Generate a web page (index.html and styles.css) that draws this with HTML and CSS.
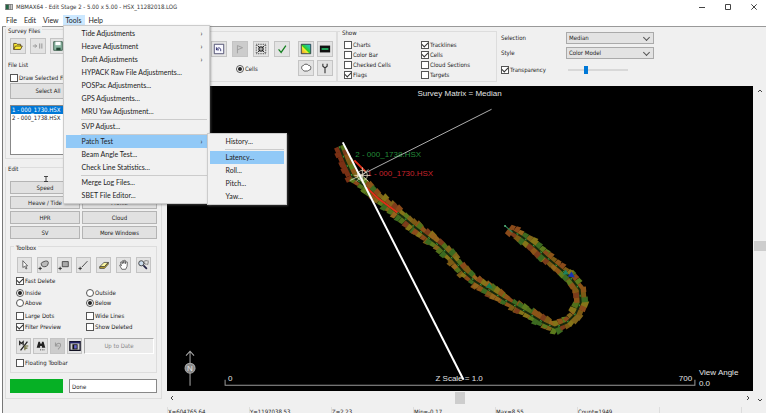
FILE: index.html
```html
<!DOCTYPE html>
<html lang="en">
<head>
<meta charset="utf-8">
<title>MBMAX64 - Edit Stage 2</title>
<link rel="stylesheet" href="styles.css">
</head>
<body>
<div class="app">
  <header class="titlebar">
    <svg class="app-icon" viewBox="0 0 9 7"><path fill="#777" d="M0 0h9v7H0z"/><path fill="#264" d="M1 1h3v5H1z"/><path fill="#ddd" d="M5 1h1v5H5zM7 1h1v5H7z"/></svg>
    <span class="title">MBMAX64 - Edit Stage 2 - 5.00 x 5.00 - HSX_11282018.LOG</span>
    <div class="window-buttons">
      <button aria-label="Minimize"><svg viewBox="0 0 6 6"><path d="M0 3.5h6"/></svg></button>
      <button aria-label="Maximize"><svg viewBox="0 0 6 6"><path d="M.5.5h5v5h-5z"/></svg></button>
      <button aria-label="Close"><svg viewBox="0 0 6 6"><path d="M.3.3l5.4 5.4M5.7.3L.3 5.7"/></svg></button>
    </div>
  </header>
  <nav class="menubar">
    <button>File</button><button>Edit</button><button>View</button>
    <div class="menu-anchor">
      <button class="open">Tools</button>
      <div class="menu tools-menu">
        <button class="sub">Tide Adjustments</button>
        <button class="sub">Heave Adjustment</button>
        <button class="sub">Draft Adjustments</button>
        <button>HYPACK Raw File Adjustments...</button>
        <button>POSPac Adjustments...</button>
        <button>GPS Adjustments...</button>
        <button>MRU Yaw Adjustment...</button>
        <hr>
        <button>SVP Adjust...</button>
        <hr>
        <div class="menu-anchor">
          <button class="sub active">Patch Test</button>
          <div class="menu patch-menu">
            <button>History...</button>
            <hr>
            <button class="active">Latency...</button>
            <button>Roll...</button>
            <button>Pitch...</button>
            <button>Yaw...</button>
          </div>
        </div>
        <button>Beam Angle Test...</button>
        <button>Check Line Statistics...</button>
        <hr>
        <button>Merge Log Files...</button>
        <button>SBET File Editor...</button>
      </div>
    </div>
    <button>Help</button>
  </nav>

  <div class="body">
    <aside class="sidebar">
      <section class="group files">
        <h2>Survey Files</h2>
        <div class="file-buttons">
          <button class="tool" aria-label="Open"><svg viewBox="0 0 14 14"><path fill="#fe3" stroke="#542" d="M2 11V4h3l1 1h4v2M2 11l2-4h8l-2 4z"/></svg></button>
          <button class="tool" aria-label="Convert"><svg viewBox="0 0 14 14"><path fill="none" stroke="#888" d="M1 7h4M3.500 5l2 2-2 2M9 4v6M11.500 4v6"/></svg></button>
          <button class="tool" aria-label="Save"><svg viewBox="0 0 14 14"><path fill="#8cb8a4" stroke="#354" d="M2 2h10v10H2z"/><path fill="#fff" d="M4 2h6v4H4z"/><path fill="#243" d="M5 9h5v3H5z"/></svg></button>
        </div>
        <h3>File List</h3>
        <label class="check"><input type="checkbox">Draw Selected Files</label>
        <button class="btn select-all">Select All</button>
        <ul class="file-list"><li class="selected">1 - 000_1730.HSX</li><li>2 - 000_1738.HSX</li></ul>
      </section>
      <section class="group edit">
        <h2>Edit</h2>
        <div class="edit-grid">
          <button class="btn">Speed</button><button class="btn">Depth</button>
          <button class="btn">Heave / Tide</button><button class="btn">Profile</button>
          <button class="btn">HPR</button><button class="btn">Cloud</button>
          <button class="btn">SV</button><button class="btn">More Windows</button>
        </div>
        <svg class="cursor" viewBox="0 0 4 6"><path fill="none" stroke="#222" stroke-width=".8" d="M0 .5h4M2 .5v5M0 5.500h4"/></svg>
        <section class="group toolbox">
          <h2>Toolbox</h2>
          <div class="tools">
            <button class="tool" aria-label="Select"><svg viewBox="0 0 14 14"><path fill="#fff" stroke="#333" stroke-width=".8" d="M4.500 2v8l2-1.600 1.600 3.300 1.200-.6-1.500-3.100H10z"/></svg></button>
            <button class="tool" aria-label="Lasso"><svg viewBox="0 0 14 14"><path fill="#bbb" stroke="#333" stroke-width=".9" d="M4 7c-1-3 1-3 3-4s5-1 5 1-1 5-4 5c-2 0-3 0-4-2z"/><path stroke="#222" d="M.5 11h4M2.500 9v4"/></svg></button>
            <button class="tool" aria-label="Rectangle"><svg viewBox="0 0 14 14"><path fill="#aaa" stroke="#333" stroke-width=".9" d="M5 3h7v6H5z"/><path stroke="#222" d="M.5 11h4M2.500 9v4"/></svg></button>
            <button class="tool" aria-label="Line"><svg viewBox="0 0 14 14"><path stroke="#333" d="M4.500 9.500L11 2.500"/><path stroke="#222" d="M.5 11h4M2.500 9v4"/></svg></button>
            <button class="tool" aria-label="Erase"><svg viewBox="0 0 14 14"><path fill="#fbf6a0" stroke="#333" stroke-width=".8" d="M2 9l5-5h5L7.500 9z"/><path fill="#cbb030" stroke="#333" stroke-width=".8" d="M2 9h5.500L12 4v2l-4.500 5H2z"/></svg></button>
            <button class="tool" aria-label="Pan"><svg viewBox="0 0 14 14"><path fill="#fff" stroke="#333" stroke-width=".8" d="M4.500 12L2 7.500c0-1.200 1-1 2 .5L3 4c.3-1 1.200-1 1.600 0L5 5.500V2.500c.3-1 1.500-1 1.700 0V5l.5-3c.3-1 1.500-.8 1.500.2L8.500 5.500l1-2c.5-.8 1.600-.4 1.400.5l-.3 4.500L9 12z"/></svg></button>
            <button class="tool" aria-label="Zoom window"><svg viewBox="0 0 14 14"><circle cx="5" cy="5" r="3" fill="#cde" stroke="#333"/><path stroke="#224" stroke-width="2" d="M7.500 7.500l4 4"/><path fill="none" stroke="#222" stroke-dasharray="1 1" d="M9 2h4v4H9z"/></svg></button>
          </div>
          <label class="check"><input type="checkbox" checked>Fast Delete</label>
          <div class="options">
            <label class="check"><input type="radio" name="side" checked>Inside</label>
            <label class="check"><input type="radio" name="side">Outside</label>
            <label class="check"><input type="radio" name="level">Above</label>
            <label class="check"><input type="radio" name="level" checked>Below</label>
          </div>
          <div class="options spaced">
            <label class="check"><input type="checkbox">Large Dots</label>
            <label class="check"><input type="checkbox">Wide Lines</label>
            <label class="check"><input type="checkbox" checked>Filter Preview</label>
            <label class="check"><input type="checkbox">Show Deleted</label>
          </div>
          <div class="filter-row">
            <button class="tool" aria-label="Filter settings"><svg viewBox="0 0 14 14"><path fill="none" stroke="#222" stroke-width="1.500" d="M2 6V2l2 2 2-2v4M3 12l8-10"/><path fill="none" stroke="#663" stroke-width="1.300" d="M8 12V7h4M8 9.500h3"/></svg></button>
            <button class="tool" aria-label="Search"><svg viewBox="0 0 14 14"><path fill="#222" d="M4 2h2v2h2V2h2l2 7H8V7H6v2H2z"/><path stroke="#222" stroke-dasharray="1 1" d="M6 11.500h6"/></svg></button>
            <button class="tool off" aria-label="Undo filter"><svg viewBox="0 0 14 14"><path fill="none" stroke="#999" stroke-width="1.200" d="M4 3v4h4M4 7c2-4 6-4 6-1 0 2-1 3-3 5"/></svg></button>
            <button class="tool" aria-label="Filter window"><svg viewBox="0 0 14 14"><path fill="#ccc" stroke="#112" stroke-width="1.500" d="M1 2h12v10H1z"/><path fill="#226" d="M1 2h12v2H1z"/><path fill="#111" d="M4 5h6v6H4z"/><path fill="#66c" d="M6 6h3v4H6z"/></svg></button>
            <button class="update" disabled>Up to Date</button>
          </div>
          <label class="check"><input type="checkbox">Floating Toolbar</label>
        </section>
        <div class="progress-row">
          <div class="progress"></div>
          <input class="state" type="text" value="Done" aria-label="Status">
        </div>
      </section>
    </aside>

    <main class="main">
      <div class="toolbar">
        <section class="group view-tools">
          <div class="view-buttons">
            <button class="tool" aria-label="Undo"><svg viewBox="0 0 14 14"><path fill="#f8f8ff" stroke="#446" d="M1.500 1.500h11v11h-11z"/><path fill="none" stroke="#226" d="M4 5v3h3M4 8c1-3 5-3 5 0v1.500"/></svg></button>
            <button class="tool off" aria-label="Flag"><svg viewBox="0 0 14 14"><path fill="none" stroke="#999" d="M4 12V3l6 2.500L4 8"/></svg></button>
            <button class="tool" aria-label="Fit"><svg viewBox="0 0 14 14"><path fill="none" stroke="#222" stroke-dasharray="1 1" d="M1.500 1.500h11v11h-11z"/><path fill="none" stroke="#111" d="M3 3l3 3M3.500 6H6V3.500M11 3L8 6M8 3.500V6h2.500M3 11l3-3M3.500 8H6v2.500M11 11L8 8M8 10.500V8h2.500"/></svg></button>
            <button class="tool" aria-label="Apply"><svg viewBox="0 0 14 14"><path fill="none" stroke="#148020" stroke-width="1.500" d="M3 7.500L6 11l5.500-8"/></svg></button>
          </div>
          <div class="color-buttons">
            <button class="tool" aria-label="Colors"><svg viewBox="0 0 14 14"><defs><linearGradient id="g" x1="1" x2="0" y2="1"><stop stop-color="#3bd"/><stop offset=".3" stop-color="#2c8"/><stop offset=".5" stop-color="#3c2"/><stop offset=".6" stop-color="#ee3"/><stop offset="1" stop-color="#e82"/></linearGradient></defs><path fill="url(#g)" stroke="#234" d="M1.500 1.500h11v11h-11z"/></svg></button>
            <button class="tool" aria-label="Display"><svg viewBox="0 0 14 14"><path fill="#111" d="M1 3h12v8H1z"/><path fill="#2b6" d="M3 6h8v2H3z"/></svg></button>
            <button class="tool" aria-label="Cloud"><svg viewBox="0 0 14 14"><path fill="#fff" stroke="#333" stroke-width=".9" d="M3 9C1 7.500 2 4 4 4c1-2 5-2 6 0 3 0 3 3 2 5-2 0-2 2-5 1.500C5 11 4 10 3 9z"/></svg></button>
            <button class="tool" aria-label="Settings"><svg viewBox="0 0 14 14"><path fill="none" stroke="#333" stroke-width="1.300" d="M4.500 2v3L7 7l2.500-2V2M7 6v7"/></svg></button>
          </div>
          <label class="check cells"><input type="radio" checked>Cells</label>
        </section>
        <section class="group show">
          <h2>Show</h2>
          <div class="show-grid">
            <label class="check"><input type="checkbox">Charts</label>
            <label class="check"><input type="checkbox" checked>Tracklines</label>
            <label class="check"><input type="checkbox">Color Bar</label>
            <label class="check"><input type="checkbox" checked>Cells</label>
            <label class="check"><input type="checkbox">Checked Cells</label>
            <label class="check"><input type="checkbox">Cloud Sections</label>
            <label class="check"><input type="checkbox" checked>Flags</label>
            <label class="check"><input type="checkbox">Targets</label>
          </div>
        </section>
        <section class="style-form">
          <label for="sel">Selection</label>
          <div class="select"><select id="sel"><option>Median</option></select></div>
          <label for="sty">Style</label>
          <div class="select"><select id="sty"><option>Color Model</option></select></div>
          <label class="check"><input type="checkbox" checked>Transparency</label>
          <input class="slider" type="range" min="0" max="100" value="29" aria-label="Transparency level">
        </section>
      </div>

      <div class="view">
        <div class="canvas">
          <svg class="plot" viewBox="167 87 585 304">
            <g id="track"></g>
            <g class="t8">
              <text x="355" y="158" fill="#238a38">2 - 000_1738.HSX</text>
              <text x="367" y="177" fill="#c8242c">1 - 000_1730.HSX</text>
            </g>
            <path fill="none" stroke="#d8d8d8" stroke-width=".8" d="M350 181L491 110"/>
            <path fill="none" stroke="#e8e0c8" stroke-width=".8" d="M354 176h16M362 168v16M356 171l12 11M368 170l-12 12"/>
            <circle cx="362" cy="176" r="5" fill="none" stroke="#e0d8b8" stroke-width=".8"/>
            <path fill="none" stroke="#fff" stroke-width="2" d="M342.500 143L463 380"/>
            <g fill="none" stroke="#aaa"><path d="M190 386v-34M186 356l4-4.500 4 4.500"/><circle cx="190" cy="368.500" r="5" fill="#888"/></g>
            <path fill="none" stroke="#999" d="M225 380v5.500h469V380"/>
            <g class="t8" fill="#e4e4e4">
              <text x="417" y="97">Survey Matrix = Median</text>
              <text x="187" y="371.500">N</text>
              <text x="228" y="381">0</text>
              <text x="435" y="381">Z Scale = 1.0</text>
              <text x="678" y="381">700</text>
              <text x="698" y="375">View Angle</text>
              <text x="698" y="386">0.0</text>
            </g>
          </svg>
        </div>
        <div class="vscroll">
          <svg viewBox="0 0 6 6"><path d="M1 4l2-2 2 2"/></svg><i></i><svg viewBox="0 0 6 6"><path d="M1 2l2 2 2-2"/></svg>
        </div>
        <div class="hscroll">
          <svg viewBox="0 0 6 6"><path d="M4 1L2 3l2 2"/></svg><i></i><svg viewBox="0 0 6 6"><path d="M2 1l2 2-2 2"/></svg>
        </div>
      </div>
      <footer class="status"><span>X=604765.64</span><span>Y=1197038.53</span><span>Z=2.23</span><span>Min=-0.17</span><span>Max=8.55</span><span>Count=1949</span><span></span><span></span></footer>
    </main>
  </div>
</div>
<script src="track.js"></script>
</body>
</html>
```
FILE: track.js
```js
// Draws the survey swath: jagged coloured cells on both sides of the trackline.
const NS = 'http://www.w3.org/2000/svg';
const group = document.getElementById('track');
const line = [[339,147],[345,162],[352,177],[365,187],[376,197],[390,208],[402,217],[415,228],[428,238],[440,247],[452,259],[463,272],[475,282],[488,290],[502,299],[516,307],[530,315],[543,323],[554,328],[566,323],[575,314],[580,303],[579,290],[569,277],[557,267],[545,257],[533,246],[521,237],[511,231]];
const colors = ['#80641a','#7c5a14','#52701a','#8a4a1a','#94641c','#5c7a1c','#857418','#7c3c1a','#8c5418','#3c6a20'];
let seed = 7;
const rnd = () => (seed = (seed * 16807) % 2147483647) / 2147483647;
function add(tag, attrs) {
  const el = document.createElementNS(NS, tag);
  for (const k in attrs) el.setAttribute(k, attrs[k]);
  group.appendChild(el);
}
for (let i = 0; i < line.length - 1; i++) {
  const [ax, ay] = line[i], [bx, by] = line[i + 1];
  const len = Math.hypot(bx - ax, by - ay), ux = (bx - ax) / len, uy = (by - ay) / len;
  for (let d = 0; d < len; d += 5) {
    for (const side of [-1, 1]) {
      const w = 5 + rnd() * 3, s = 5 + rnd();
      const x = ax + ux * d, y = ay + uy * d, nx = -uy * side, ny = ux * side;
      const p = [[x, y], [x + nx * w, y + ny * w], [x + nx * w + ux * s, y + ny * w * 0.8 + uy * s], [x + ux * s, y + uy * s]];
      const c = i < 2 && side > 0 ? '#7a3014' : colors[Math.floor(rnd() * colors.length)];
      add('polygon', { points: p.map(q => q.map(v => v.toFixed(1)).join()).join(' '), fill: c });
    }
  }
}
const route = 'M' + line.map(p => p.join(' ')).join('L');
add('path', { d: route, fill: 'none', stroke: '#16280c', 'stroke-width': 2 });
add('path', { d: route, fill: 'none', stroke: '#3f9a3c', 'stroke-width': 1, 'stroke-dasharray': '2 8' });
add('path', { d: 'M354 161l11 11M366 188l12 11 19 14', fill: 'none', stroke: '#e03018', 'stroke-width': 2 });
add('path', { d: 'M504 226l8 7', stroke: '#2a8a5a', 'stroke-width': 1 });
add('circle', { cx: 504.5, cy: 226.5, r: 1, fill: '#5ab07a' });
add('path', { d: 'M567 277l4-5 3 6z', fill: '#1834b0' });
add('path', { d: 'M562 275l3-5 3 5z', fill: '#1c8060' });
add('path', { d: 'M485 288l4-5 3 6z', fill: '#1c7a4c' });
```
FILE: styles.css
```css
* { box-sizing: border-box; }
body { margin: 0; background: #fff; color: #222; font: 6px/10px "DejaVu Sans Condensed", "Open Sans", sans-serif; }
button, input, select { font: inherit; color: inherit; margin: 0; padding: 0; }
h2, h3 { margin: 0; font: inherit; }
svg { display: block; }
.app { height: calc(100vh - 4px); margin: 0 8px 0 2px; display: flex; flex-direction: column; overflow: hidden; }
.menubar { font-family: Lato, sans-serif; font-size: 7px; }
.titlebar { display: flex; align-items: center; height: 13px; padding-left: 3px; font-size: 6px; font-family: "DejaVu Sans Condensed", sans-serif; }
.app-icon { width: 8px; height: 6px; }
.title { margin-left: 3px; color: #333; }
.window-buttons { margin-left: auto; display: flex; gap: 20px; padding-right: 9px; }
.window-buttons button { border: 0; background: none; }
.window-buttons svg { width: 6px; height: 6px; fill: none; stroke: #444; stroke-width: 1; }
.menubar { display: flex; gap: 1px; height: 13px; padding: 2px 0 1px 1px; }
.menubar button { display: block; border: 0; background: none; padding: 0 3px; height: 10px; line-height: 10px; }
.menubar > .menu-anchor > button.open { background: #cce8ff; }
.menu-anchor { position: relative; z-index: 5; }
.menu { position: absolute; background: #f1f1f1; border: 1px solid #ccc; box-shadow: 1px 1px 2px #6668; padding: 1px 2px; }
.menubar .menu button { width: 100%; height: 13px; line-height: 13px; text-align: left; padding: 0 4px 0 16px; white-space: nowrap; }
.menubar .menu button.active { background: #91c9f7; }
.menubar .menu button.sub { display: flex; justify-content: space-between; }
.sub::after { content: "›"; }
.menu hr { border: 0; border-top: 1px solid #ccc; margin: 1px 0 0 15px; }
.tools-menu { left: 0; top: 10px; width: 147px; }
.patch-menu { left: 141px; top: -2px; width: 80px; }
.patch-menu hr { margin-bottom: 1px; }

.body { flex: 1; display: flex; min-height: 0; border-top: 1px solid #999; background: #f0f0f0; }
.sidebar { width: 165px; flex: none; padding: 2px 5px 0 2px; border-left: 1px solid #777; }
.group { border: 1px solid #ddd; }
.group > h2 { width: max-content; padding: 0 2px; margin-top: -4px; background: #f0f0f0; }
.tool { width: 16px; height: 16px; border: 1px solid #c4c4c4; background: #e3e3e3; display: grid; place-items: center; }
.tool.off { background: #ccc; }
.tool svg { width: 12px; height: 12px; }
.btn { border: 1px solid #b4b4b4; background: #e1e1e1; }
.check { display: flex; align-items: center; gap: 1px; white-space: nowrap; }
.check input { appearance: none; width: 8px; height: 8px; border: 1px solid #555; background: #fff; flex: none; display: grid; place-items: center; }
.check input[type=radio] { border-radius: 50%; }
.check input[type=radio]:checked::after { content: ""; width: 4px; height: 4px; border-radius: 50%; background: #222; }
.check input[type=checkbox]:checked::after { content: ""; width: 5px; height: 3px; border: solid #333; border-width: 0 0 1px 1px; transform: rotate(-45deg); margin-bottom: 2px; }
.files { padding: 0 4px; height: 130px; }
.files > h2, .edit > h2 { margin-left: -4px; }
.files > h3 { margin-left: -2px; }
.file-buttons { display: flex; gap: 4px; margin: 2px 0 6px; }
.files .check { margin: 3px 0 0; }
.select-all { width: 76px; height: 16px; display: block; }
.file-list { list-style: none; margin: 6px 0 0; padding: 0; height: 50px; background: #fff; border: 1px solid #888; line-height: 8px; }
.file-list li { padding-left: 1px; }
.file-list .selected { background: #0078d7; color: #fff; width: 60px; }
.edit { position: relative; margin-top: 8px; padding: 0 4px 5px; }
.edit-grid { display: grid; grid-template-columns: 70px 1fr; grid-auto-rows: 13px; gap: 2px; margin-top: 7px; }
.cursor { position: absolute; left: 38px; top: 8px; width: 4px; height: 6px; }
.toolbox { margin-top: 7px; padding: 0 2px 4px 5px; }
.toolbox > h2 { margin-left: -2px; }
.tools { display: flex; justify-content: space-between; margin: 4px 3px 3px 1px; }
.tools .tool { width: 15px; }
.options { display: grid; grid-template-columns: 70px 1fr; margin: 2px 0; }
.spaced { row-gap: 1px; margin: 3px 0; }
.filter-row { display: flex; gap: 2px; margin: 6px 0 4px; }
.filter-row .tool { width: 15px; }
.update { flex: 1; border: 1px solid #bbb; border-color: #aaa #fff #fff #aaa; background: #ececec; }
.update:disabled { color: #888; }
.progress-row { display: flex; gap: 6px; margin-top: 6px; }
.progress { width: 53px; background: #06b025; }
.state { flex: 1; min-width: 0; height: 14px; border: 1px solid #888; background: #fff; padding: 0 2px; }

.main { flex: 1; min-width: 0; display: flex; flex-direction: column; }
.toolbar { height: 59px; display: flex; padding: 4px 0; }
.view-tools { width: 170px; position: relative; display: flex; justify-content: flex-end; gap: 8px; padding: 9px 3px 0 0; }
.view-buttons { display: flex; gap: 5px; }
.color-buttons { display: grid; grid-template-columns: 16px 16px; gap: 3px; align-content: start; }
.cells { position: absolute; left: 68px; top: 32px; }
.show { width: 160px; padding-left: 6px; }
.show > h2 { margin-left: -4px; }
.show-grid { display: grid; grid-template-columns: 77px 1fr; margin-top: 2px; }
.style-form { display: grid; grid-template-columns: 65px 88px; grid-template-rows: 12px 12px 16px; align-content: start; align-items: center; gap: 3px 0; padding: 1px 0 0 4px; }
.select { position: relative; }
.select::after { content: ""; position: absolute; right: 5px; top: 3px; width: 4px; height: 4px; border: solid #555; border-width: 0 1px 1px 0; transform: rotate(45deg); pointer-events: none; }
select { appearance: none; display: block; width: 100%; height: 12px; border: 1px solid #aaa; background: #e3e3e3; padding: 0 2px; }
.slider { appearance: none; height: 8px; width: 60px; margin-left: 2px; background: linear-gradient(#d8d8d8, #d8d8d8) center / 100% 2px no-repeat; }
.slider::-webkit-slider-thumb { appearance: none; width: 4px; height: 8px; background: #0078d7; }

.view { flex: 1; min-height: 0; display: grid; grid-template: 1fr 14px / 1fr 13px; }
.canvas { background: #000; min-height: 0; overflow: hidden; }
.plot { width: 100%; height: 100%; }
.t8 { font: 8px "Liberation Sans", sans-serif; }
.vscroll, .hscroll { display: flex; justify-content: space-between; align-items: center; }
.vscroll svg, .hscroll svg { width: 6px; height: 6px; margin: 2px; fill: none; stroke: #444; stroke-width: 1; }
.vscroll { grid-row: 1 / 3; grid-column: 2; flex-direction: column; }
.vscroll i { width: 12px; height: 10px; background: #cdcdcd; }
.hscroll i { width: 10px; height: 12px; background: #cdcdcd; }
.status { height: 8px; padding-top: 2px; display: grid; grid-template-columns: repeat(7, 82px) 1fr; overflow: hidden; }
.status span { border-left: 1px solid #ddd; }
```
